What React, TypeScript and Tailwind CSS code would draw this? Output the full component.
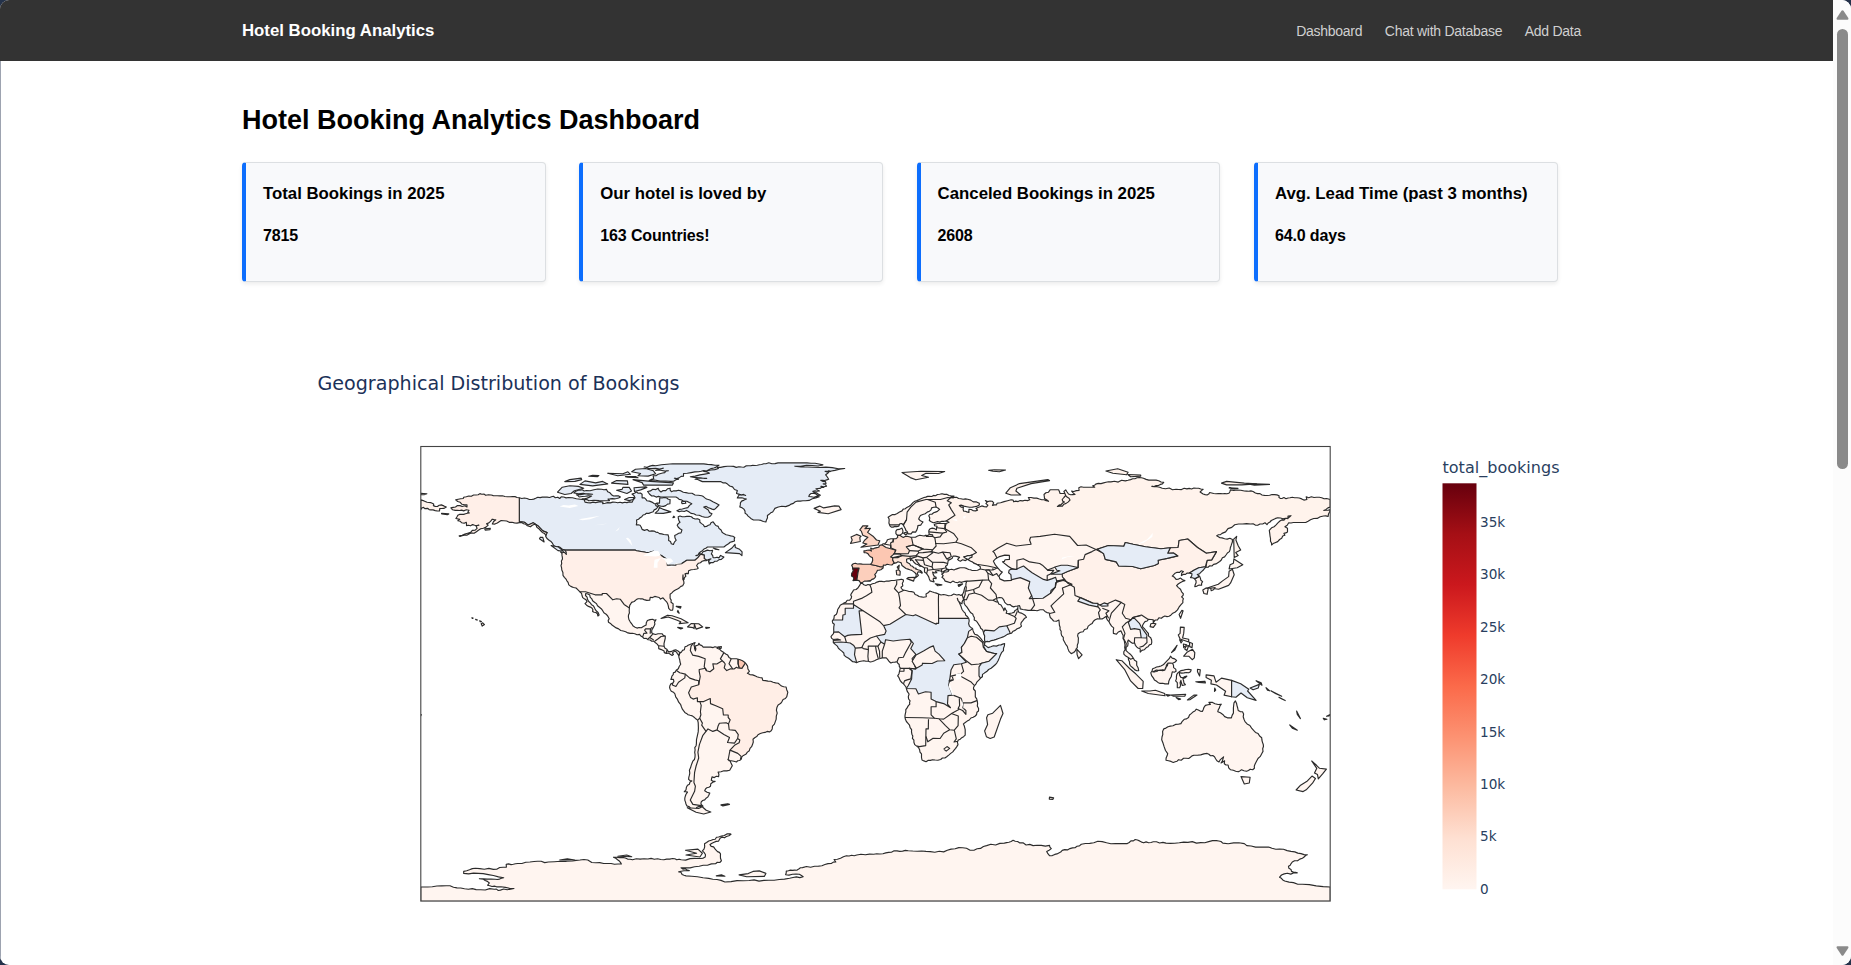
import React from "react";

const SCALE = 2.526;
const MAP_X = 420.8;
const MAP_Y = 446.5;
const MAP_W = 909.4;
const MAP_H = 454.6;

const NONE = "#e5ecf6";
const BASE = "#fff5f0";
const LINE = "#2b2b2b";

type Point = [number, number];

// Adds small alternating bends to the long segments of a coast line.
function weather(points: Point[]): Point[] {
  const out: Point[] = [];
  points.forEach((a, i) => {
    const b = points[(i + 1) % points.length];
    out.push(a);
    const dx = b[0] - a[0];
    const dy = b[1] - a[1];
    const len = Math.hypot(dx, dy);
    if (len < 1.3 || len > 15 || dx === 0 || dy === 0) return;
    const n = Math.min(4, Math.max(2, Math.round(len / 0.9)));
    for (let k = 1; k < n; k++) {
      const t = k / n;
      const seed = Math.sin((a[0] + dx * t) * 12.9 + (a[1] + dy * t) * 78.2) * 43758.5;
      const off = (seed - Math.floor(seed) - 0.5) * 0.62;
      out.push([a[0] + dx * t - (dy / len) * off, a[1] + dy * t + (dx / len) * off]);
    }
  });
  return out;
}

function trace(points: string, closed = true, rough = false): string {
  let list = points
    .trim()
    .split(/\s+/)
    .map((pair) => pair.split(",").map(Number) as Point);
  if (rough) list = weather(list);
  const d = list
    .map(([lon, lat]) => `${(MAP_X + (lon + 180) * SCALE).toFixed(1)} ${(MAP_Y + (90 - lat) * SCALE).toFixed(1)}`)
    .join("L");
  return "M" + d + (closed ? "Z" : "");
}

type Shape = { fill: string; pts: string };

const NORTH_AMERICA = `-141,69.7 -143.6,70.15 -145.7,70.1 -149.7,70.5 -152.1,70.8 -154.3,70.7 -156.6,71.35 -158.1,70.8 -161,70.4 -163,69.9 -163.2,69.4 -166.2,68.9 -164.4,67.9 -163.7,67.1 -161.7,66.9 -161.7,66.1 -164.5,66.6 -168.1,65.7 -166.4,64.7 -163,64.5 -160.9,64.8 -161.4,64 -160.8,63.7 -163,63.1 -164.7,63.1 -165.7,62.1 -166.1,61.5 -164.6,61.2 -165.3,60.6 -163.8,59.8 -162,60 -161.9,58.7 -158.7,58.8 -157,58.9 -158.2,58.6 -157.7,57.6 -160.3,56 -164.8,54.6 -164.5,54.4 -161.8,54.9 -158.1,56.2 -156.3,57.4 -154.2,58.1 -153.3,58.9 -154,59.4 -151.7,61.2 -150.3,61 -151.7,59.3 -149.7,59.7 -148.2,60.7 -146,60.5 -143.9,60 -140,59.9 -137.8,58.6 -136.6,58.2 -135,59.2 -134.1,58.1 -131.9,56 -130.5,54.8 -130.5,54.3 -129.1,52.8 -127.9,51.7 -127.4,50.8 -125.6,50.4 -123,49 -122.4,47.3 -123.1,48.1 -124.7,48.3 -124.1,46.9 -123.9,45.5 -124.5,42.8 -124.2,41.1 -123.7,39 -122.5,37.5 -121.7,36.2 -120.6,34.6 -118.5,34 -117.1,32.5 -116.2,31 -115.9,30.2 -114.2,28.6 -115,27.8 -113.6,26.7 -112.2,26 -112,24.7 -110.7,24.3 -109.9,22.9 -109.4,23.3 -110.6,25 -111.3,26.3 -112.8,28 -114,29.5 -114.8,31 -114.7,31.8 -113.1,31.2 -112,28.9 -110.5,27.8 -109.3,26.4 -108,25 -106,22.9 -105.4,21.8 -105.7,20.4 -104.3,19.3 -101.7,17.8 -98,16.2 -95.3,15.9 -93.4,15.6 -91.6,14 -89.2,13.4 -87.8,13 -87.2,12.4 -85.8,11 -85.8,10 -84.8,9.6 -83.7,9 -83.6,8.4 -82,8.2 -80.5,7.3 -80,7.6 -80.4,8.3 -79.5,9 -78.4,8 -77.9,7.3 -77.4,8.4 -79.1,9.5 -80.8,8.9 -82.2,9 -83.7,10.9 -83.5,13 -83.2,15 -84.5,15.9 -86.1,15.9 -88,15.8 -88.6,16.3 -88,18.3 -87.6,19 -87.5,20.5 -86.9,21.4 -88.2,21.6 -90.3,21.1 -90.8,19.3 -91.9,18.7 -94.4,18.1 -95.9,18.9 -96.5,19.8 -97.6,21.5 -97.8,22.5 -97.5,25 -97.3,27.1 -96.6,28.3 -94.7,29.4 -93.2,29.7 -91.6,29.4 -89.4,29.1 -89.2,30.3 -86.4,30.4 -85.1,29.6 -84.1,30.1 -82.7,28.5 -82,26.9 -81.2,25.2 -80.3,25.2 -80.1,26.9 -81.3,29.9 -81.3,31.5 -79.2,33.2 -77.6,34.1 -76.3,34.9 -75.8,35.9 -76.3,37.5 -76.2,39.2 -75.8,37.3 -75.1,38.6 -75.4,39.6 -74.1,39.7 -74,40.8 -71.9,41.3 -70.7,41.5 -70.2,41.8 -70.8,42.9 -70.1,43.8 -67,44.8 -65.1,45.5 -66.1,44.7 -65.8,43.5 -63.6,44.6 -61,45.3 -60,46.2 -61.3,46.9 -62,45.9 -64.3,46 -65,47.5 -64.5,48.9 -67.5,48.6 -70.3,47 -71.1,46.8 -68.5,48.8 -66.5,50.2 -60,50.2 -58.2,51.5 -55.8,52.6 -55.7,54 -57.3,54.6 -60,55.5 -61.9,57.5 -64.3,60.2 -65.5,59 -66.2,58.8 -67.7,58.2 -69.5,60 -69.6,61 -72.2,61.6 -73.8,62.4 -77.4,62.5 -78.1,62.2 -77.4,60 -78.5,58.8 -76.6,57 -77,55.8 -79.5,54.8 -78.9,52.9 -80,51.2 -81.9,52.8 -82.1,55 -85.5,55.5 -88.5,56.6 -92.4,57.2 -93.2,58.8 -94.7,59 -94.6,60.9 -92,62.9 -90.7,63.6 -88,64.2 -86.9,65.2 -86,66.2 -87.3,67.2 -85.5,67.6 -85.4,69.7 -82.6,69.6 -81.3,69 -81.4,67.3 -83.9,66.3 -85.8,66.6 -88.5,68 -90.5,68.5 -91.5,69.7 -92.4,69.7 -92.4,71.1 -94.6,72 -96.4,71.2 -95.2,69.7 -96.4,67.9 -98.4,67.8 -102,67.7 -104,68 -108,67.4 -107.9,68 -109,68.2 -110.8,67.8 -115,68 -115.3,68.9 -121.5,69.8 -124.4,70.1 -125,69.4 -127.5,70.3 -129,69.8 -131,70 -134.5,69.5 -137,69 -139,69.6`;

const SOUTH_AMERICA = `-77.4,8.4 -76.8,8.6 -75.7,9.5 -75.4,10.7 -74.2,11.3 -72.2,12.1 -71.4,12.4 -71.9,11.4 -71.6,10 -71.3,9.1 -71.1,9.9 -71.4,11 -70.2,11.4 -69.9,12.1 -68.2,10.6 -66.2,10.6 -64.3,10.4 -61.9,10.7 -62.7,10.1 -61,9 -60,8.4 -58.5,7.4 -57.1,6 -55,6 -53.6,5.6 -51.8,4.6 -51.3,4 -50.5,1.9 -49.9,1 -50.7,0.2 -48.6,-0.4 -47.9,-0.7 -44.9,-1.6 -44.6,-2.6 -41.5,-2.9 -38.5,-3.7 -37.2,-4.8 -35.4,-5.2 -34.7,-7.3 -35.1,-9 -37,-11 -39,-13.2 -39.3,-17.9 -40.9,-21.8 -42,-23 -44.6,-23.3 -46.5,-24.1 -48.5,-25.9 -48.7,-28 -50.7,-31 -52.3,-32.3 -53.8,-34.3 -55,-34.9 -57.1,-34.4 -58.4,-33.9 -57.2,-35.3 -56.7,-36.4 -57.7,-38.2 -62.3,-38.9 -62.1,-40.7 -64.7,-40.8 -65,-42.1 -63.5,-42.6 -65.2,-43.5 -65.3,-44.5 -67.3,-45.6 -67.6,-46.3 -65.6,-47.2 -66,-48.1 -67.6,-49.9 -69,-50.7 -69.1,-51.6 -68.3,-52.4 -70.8,-52.9 -71,-53.8 -73,-53.5 -74.7,-52.3 -75.5,-50 -75,-47.7 -74.4,-46.8 -75.7,-46.6 -74.4,-44.1 -72.7,-42.4 -74,-41.8 -73.5,-39.3 -73.2,-37.1 -71.7,-33.9 -71.4,-30.1 -70.9,-27.6 -70.1,-21.4 -70.4,-18.3 -73.4,-16.4 -76,-14.6 -77.1,-12.2 -79.4,-7.9 -81.3,-6.1 -81.4,-4.7 -79.8,-3 -80,-2.2 -81,-2.2 -80.6,-0.9 -80,0.4 -78.9,1.4 -77.1,3.8 -77.5,5.6 -77.9,7.3`;

const OLD_WORLD = `180,69 178.6,69.4 175.7,69.9 173.6,69.8 170.5,70.1 170.8,69 169.6,68.8 167.8,69.6 164.1,69.7 160.9,69.4 159.7,69.9 159.8,70.5 157,71 153,70.8 150.4,71.6 149.5,72.2 146,72.4 140.5,72.8 139.9,71.5 137.5,71.3 133.9,71.4 132.3,71.8 131.3,70.8 129.7,71.2 128.5,72 129.7,73 127,73.5 123.3,73.2 119,73.1 113.5,73.5 109.4,74.2 112.8,75 114.1,75.8 111.1,76.7 108.2,76.7 106.1,77.4 104.4,77.7 101,76.9 98.9,76.4 93.2,76 90.3,75.6 87.2,75.1 86,74.5 86.8,73.9 82.3,73.9 80.5,73.7 80.6,72.6 78.5,72.2 77.6,72.4 79,71 76.4,71.2 75.3,72.8 74.6,72.2 75.3,70.6 73.9,69 74.8,68 72,66.3 74,66.4 76.2,68 77,68.8 75,71.4 73.1,71.4 72.8,72.2 72.5,72.9 69.2,72.9 68.5,71.9 66.7,71 66.9,69.4 68.5,68.3 64.9,69.2 60.5,69.8 61.1,68.9 57.3,68.6 54.7,68.1 54.5,68.8 53.7,68.9 48.1,67.5 47.9,66.9 46.3,66.7 46.8,67.7 46.3,68.3 43.5,68.6 44.2,68 43.7,67.4 44.5,66.8 44,66.1 42.1,66.5 39.8,65.5 40.4,64.8 39.6,64.5 37,65.1 37,63.9 36.2,64.1 34.9,64.4 34.8,65.9 33.2,66.6 33.9,66.8 38.4,66 40,66.3 41.1,66.8 41.1,67.5 36.5,69.1 33.8,69.3 32.1,69.9 30,69.9 31.1,70.4 28.2,71.1 24.5,71 21.4,70.3 19.2,69.8 16.4,68.6 14.8,67.8 12.4,65.9 10.5,64.5 8.6,63.5 5.9,62.6 5,62 5.3,59.7 5.7,58.6 7,58.1 8.4,58.3 10.4,59.5 11,58.9 11.8,57.4 12.6,56.3 12.9,55.4 14.1,55.4 14.7,56.2 15.9,56.1 16.4,57 16.8,58.7 17.9,58.9 18.8,60.1 17.8,60.6 17.1,61.3 17.8,62.7 21.4,64.4 22.2,65.7 23.9,66 25.4,65.1 24.5,64.3 21.5,63.2 21.1,62.6 21.5,61.7 21.3,60.7 22.9,59.8 26.3,60.4 28,60.5 29.1,60 28,59.5 24.6,59.5 23.3,59.2 23.4,58.6 24.4,58.4 24.1,57 22.5,57.7 21.6,57.4 21.1,56 21.3,55.2 19.9,54.9 18.6,54.7 17.6,54.9 14.8,54.1 12.5,54.5 11,54 10,54.6 9.9,55 10.9,56.5 10.5,57.7 9.4,57.2 8.5,57.1 8.1,56.5 8.1,55.5 8.8,54 8.1,53.5 6.1,53.5 4.7,53.1 3.8,51.6 2.5,51.1 1.6,50.9 1.3,50.1 -1,49.4 -1.9,49.8 -1.6,48.6 -3.3,48.9 -4.6,48.7 -4.5,48 -3,47.6 -1.2,46 -1.4,44 -1.9,43.4 -4.3,43.4 -8,43.8 -9.4,43 -9,41.5 -8.8,40.8 -9.5,38.7 -8.8,38.3 -8.9,36.9 -7.5,37.1 -6.5,36.9 -5.9,36 -5.4,36 -4.4,36.7 -2.1,36.7 -1.4,37.4 -0.7,37.6 0.1,38.7 -0.3,39.3 0.8,41 2.1,41.2 3,41.9 3.1,43.1 4.6,43.4 6.5,43.1 8.9,44.4 10.2,43.9 10.5,42.9 12.1,41.7 13.6,41.2 15.7,40 16.1,38.7 15.7,37.9 16.6,38.6 17,39 16.5,39.7 16.9,40.4 18.4,39.8 18.5,40.2 15.9,41.5 16.1,41.8 15.1,42 14,42.8 13.5,43.6 12.4,44.2 12.3,45.4 13.7,45.6 13.9,44.8 14.3,45.2 15.2,44.2 16,43.5 18.5,42.5 19.4,41.9 19.4,40.3 20.7,39 21.1,38.3 21.3,37.6 21.7,36.8 23.2,36.4 22.8,37.5 23.1,37.9 24,37.7 24,38.2 22.9,39.3 22.6,40.3 24.3,40 23.7,40.7 24.9,40.9 26.1,40.6 26.3,40.2 27.2,40.7 28.8,41.1 29,41.3 28.1,41.6 27.7,42.6 28.6,43.7 28.8,44.9 29.6,45.3 30.7,46.6 33.3,46.1 32.5,45.3 33.6,44.6 36.5,45.4 34.9,46.3 38.2,47.1 38.2,46.2 36.7,45.2 37.5,44.7 40,43.4 41.5,42.4 41.5,41.5 40.4,41 38.3,40.9 36.9,41.3 35.2,42 33.5,42 31.1,41.1 29.2,41.2 28.8,40.5 27.3,40.4 26.2,39.5 26.8,38.9 26.3,38.2 27,37.7 27.6,36.7 29.7,36.1 30.6,36.7 32.5,36.1 34,36.2 36.2,36.7 35.8,35 35.1,33.1 34.5,31.5 33.8,31 32.2,31.2 31,31.6 28.9,30.9 25,31.6 23.2,32.2 21.5,32.8 20,31.6 20.1,30.5 19,30.3 15.7,31.4 15.2,32.3 11.5,33.1 10.3,33.8 10.1,34.3 10.8,34.8 10.6,35.9 11.1,37.1 9.5,37.3 5.3,36.7 1.5,36.6 -1.2,35.7 -2.2,35.2 -4.6,35.3 -5.2,35.8 -5.9,35.8 -6.9,34.1 -8.7,33.2 -9.8,31.2 -9.6,29.9 -12.6,28 -13.1,27.6 -14.4,26.3 -15.1,24.5 -16.3,23 -17.1,20.9 -16.3,19.6 -16.5,16.7 -17.6,14.7 -16.7,13.6 -16.7,12.4 -15.1,11 -13.2,8.9 -12.4,7.3 -9,4.8 -7.5,4.4 -5.8,5 -4.6,5.2 -2,4.7 1.1,5.9 2.7,6.3 4.3,6.3 5.4,4.9 6.1,4.3 8.5,4.8 9.4,3.7 9.8,2.3 9.5,1 8.8,-0.8 9.5,-2 11.1,-4 12.3,-6 13.3,-8 13,-9 13.7,-10.7 13.6,-12 12.5,-13.5 11.8,-15.8 11.7,-17.3 12.8,-19.5 14.3,-22.1 14.4,-23.9 15.2,-27.1 16.3,-28.6 18.2,-31.7 18.2,-33.1 18.4,-34.1 20,-34.8 22.6,-34 24.7,-34.2 25.8,-33.9 28.2,-32.8 30.6,-30.9 32.2,-28.8 32.8,-26.2 35.5,-24.3 35.5,-22.1 34.8,-19.8 36.3,-18.7 39.5,-16.7 40.8,-14.7 40.3,-10.8 39.5,-9.1 39.5,-6.8 38.8,-6 39.2,-4.7 40.1,-3.3 41.6,-1.7 43.1,0.3 46.6,2.9 48.6,5.3 50.7,9.2 51.1,12 48.9,11.4 44.6,10.4 43.1,11.5 43.3,12.4 41.2,14.5 39.3,15.7 38.4,18 37.2,18.9 37.1,21 35.5,24 33.9,26.6 32.4,29.9 33.4,28.3 34.2,27.7 34.9,29.5 35.1,28.1 37.2,24.9 38.5,23.7 39.1,21.3 40.9,19.5 42.7,16.7 43.2,13.2 43.5,12.6 45,12.7 48.7,14 52.2,15.6 55.3,17.2 57.8,18.9 57.7,20.3 59.8,22.4 58.6,23.6 56.8,24.3 56.4,26.3 56,25.5 54,24.1 51.8,24 51.6,25.4 51.2,26.1 50.8,25 50.2,26.4 48.8,27.7 48,29.9 50.1,30.1 50.9,29 51.6,27.9 54.7,26.5 57,27 57.3,25.7 61.5,25.1 66.4,25.4 67.1,24.7 68.8,24.1 69.2,22.3 70.5,20.9 72.6,21.3 72.8,19.2 73.5,16 74.8,12.7 76.6,8.9 77.5,8 79.2,9.2 79.9,10.4 80.3,13.3 80.2,15.9 82.2,16.7 85,19.5 87,21.4 88.9,21.7 90.5,22.2 91.4,22.8 92.4,20.7 94.3,18.2 94.2,16 95.4,15.7 97.2,17 97.6,16.1 98.5,13.1 98.8,11.4 98.3,7.8 100.1,6.5 100.6,3.9 101.4,2.8 103.5,1.2 104.2,1.3 103.4,3.4 103.4,4.9 102.1,6.2 100.1,8.4 99.2,9.2 99.2,10.5 100,12 100.1,13.4 101,12.6 102.6,12.2 103.5,10.6 104.8,9.9 104.8,8.6 106.4,9.5 107.2,10.4 109.2,11.7 109.3,13.4 107.4,16.7 106.4,18 105.7,19.1 106.7,20.7 108.1,21.6 109.9,21.4 110,20.3 110.8,21.3 113.8,22.5 116.9,23.2 118.7,24.5 121.7,28.2 121.9,29.8 121.2,30.5 121.9,31.7 119.2,34.9 120.6,36.1 122.5,36.9 120.8,37.9 119,37.4 117.5,38.7 118,39.2 121,40.8 121.9,40.5 121.1,38.9 124.3,39.9 125.3,39.6 124.7,38.1 126.2,37.7 126.9,36.9 126.4,34.5 129.1,35.1 129.5,36.5 128.3,38.6 127.4,39.3 129.7,41 130.8,42.2 133.2,42.7 135.5,44 138.2,46.3 140.1,48.4 140.5,50 141.3,52.2 141.3,53.2 137.2,53.8 135.1,54.7 137.2,55.6 142.2,59 148.5,59.3 151.3,58.8 154.2,59.8 155,59.1 156.7,60.7 159.3,61.8 163.3,61.4 163.3,62.5 164.5,62.6 163.2,61.6 160.1,60.5 156.8,57.8 155.9,56.8 156.4,52.5 156.8,51 158.2,51.9 160,53.2 162.1,54.9 161.7,55.6 163.1,56.2 163.1,57.6 162.1,58.2 163.6,59.8 166.3,59.9 170.3,59.9 172.2,61 177.4,62.5 179.2,62.3 180,65 177.5,64.7 180,66`;

const ANTARCTICA = `-180,-84.4 -177.3,-84.4 -169.9,-83.9 -164.2,-84.8 -158.1,-85.4 -150.9,-85.3 -148.5,-85.6 -143.1,-85 -150,-84.3 -153.6,-83.7 -152.9,-82.8 -154.5,-81.8 -156.8,-81.1 -150.6,-81.3 -147.2,-80.7 -155.3,-79.1 -163,-79 -163,-78.2 -158.4,-77 -151.3,-77.4 -146.1,-76.5 -146.2,-75.4 -144.3,-75.5 -141.6,-75.1 -135.2,-74.3 -129.5,-74.5 -120,-74.1 -113.9,-73.7 -112.3,-74.7 -106,-75.1 -100.6,-75.3 -101.3,-74.2 -103.7,-72.6 -99,-72.9 -96.2,-73.6 -90.1,-73.3 -85,-73.5 -80.3,-73.1 -76.9,-73.6 -69.9,-73.1 -67.4,-72.5 -67.3,-71.6 -68.5,-70.1 -67.6,-68.5 -67.7,-67.3 -65,-65.9 -62.1,-64.6 -57.6,-63.3 -57.2,-63.5 -59,-64.4 -61.5,-65.1 -62.1,-66.2 -65.5,-67.6 -63.6,-69.2 -61.8,-70.7 -61.4,-72 -61,-74 -63.3,-75.2 -69.8,-76.2 -77,-76.8 -73.7,-77.9 -77.9,-78.4 -75,-80 -66,-81 -59.6,-82.4 -50,-81.8 -42.2,-81.7 -34,-80.9 -28.6,-80.3 -30.1,-79.3 -35.6,-79.5 -35.3,-78.1 -32,-77.7 -28.9,-76.7 -22.5,-76.1 -17.5,-75.1 -15.7,-74.5 -16.4,-73.5 -11.5,-72 -7.4,-71.7 -0.7,-71.4 4.1,-70.9 8.5,-70.1 13,-70 20,-70.3 27,-70.5 33,-68.8 39,-69.8 44,-68 51,-67 54.5,-65.9 57,-66.9 62.4,-68 68.9,-67.9 69.6,-69.2 67.8,-70.3 68.9,-72 71,-71.5 73.9,-69.9 78,-68.9 81.5,-67.5 88,-66.3 95,-67.2 99.7,-67.2 102.8,-65.6 106.2,-66.9 110,-66.5 115,-67 122,-66.6 128.8,-66.8 135,-66 137.5,-67 146,-67.2 147,-68 154,-68.6 160,-69.4 166,-70.5 171,-71.6 169,-73 165,-74.5 163.5,-76.2 164.7,-78.2 167,-78.8 161.8,-79.2 160,-80.5 162,-82 169,-83.3 180,-84.4 180,-90 -180,-90`;

const LANDMASSES: string[] = [NORTH_AMERICA, SOUTH_AMERICA, OLD_WORLD, ANTARCTICA].map((pts) => trace(pts, true, true));

const REGIONS: Shape[] = [
  // North and South America
  { fill: NONE, pts: "-141,72 -141,60.3 -139,60 -137.5,58.9 -135.5,59.8 -133.4,58.4 -131.7,56.6 -130,55.9 -131,54.5 -130,48 -122.8,49 -95.2,49 -94.6,48.7 -91,48.1 -89.6,48 -88,48.5 -84.8,46.8 -82.5,45.3 -82.4,43 -79,43 -79,43.4 -76.8,43.6 -74.7,45 -71.5,45 -70.3,46 -69.2,47.4 -67.8,47 -67.8,45.7 -66.5,44 -55,42 -50,60 -70,70 -90,74" },
  { fill: "#ffefe8", pts: "-141,72 -141,60.3 -139,60 -137.5,58.9 -135.5,59.8 -133.4,58.4 -131.7,56.6 -130,55.9 -131,53.5 -150,50 -175,50 -175,73" },
  { fill: "#ffefe8", pts: "-122.8,49 -95.2,49 -94.6,48.7 -91,48.1 -89.6,48 -88,48.5 -84.8,46.8 -82.5,45.3 -82.4,43 -79,43 -79,43.4 -76.8,43.6 -74.7,45 -71.5,45 -70.3,46 -69.2,47.4 -67.8,47 -67.8,45.7 -66,44.5 -66,30 -80,22 -97.1,25.9 -99.5,27.5 -101,29.5 -102.5,29.7 -104,29.3 -106.5,31.8 -108.2,31.8 -108.2,31.3 -111,31.3 -114.8,32.5 -117.3,32.5 -128,33 -128,49" },
  { fill: "#ffeee6", pts: "-60.7,5.2 -59.9,4.5 -59.5,3.9 -59.9,2.4 -58.9,1.3 -57.3,2 -56,1.9 -55,2.6 -54.5,2.3 -52.9,2.2 -51.6,4.2 -49,5 -30,-2 -30,-20 -45,-30 -53.4,-33.8 -53.2,-32.7 -54.5,-31.5 -57.6,-30.2 -55.8,-28.3 -54,-27.3 -53.7,-26.2 -54.6,-25.6 -54.3,-24.1 -55.5,-22.4 -57.9,-22.1 -58.2,-19.8 -57.5,-18.2 -58.3,-17.3 -58.3,-16.3 -60.2,-16.3 -60.5,-13.8 -63.2,-12.6 -65.3,-11.8 -65.4,-9.8 -68,-11 -70.5,-11 -70.5,-9.5 -72.2,-10 -73.2,-9.4 -74,-7.5 -72.9,-5.2 -70,-4.3 -69.4,-1.1 -69.8,1 -69.8,1.7 -67.3,2.2 -66.9,1.2 -65.5,0.8 -64,2 -64.4,4 -62.8,3.9" },
  { fill: "#fcc7b2", pts: "-54.4,5.9 -54.4,4 -54,2.4 -52.9,2.2 -51.6,4.2 -52,6" },
  // Africa
  { fill: NONE, pts: "-17.3,21.3 -13,21.3 -12.9,23.3 -12,23.5 -12,26 -8.7,26 -8.7,27.4 -4.9,25 -6.5,24.9 -5.4,15.6 -9.6,15.4 -11,15.2 -12.2,14.7 -14.6,16.6 -18,16.5 -20,20" },
  { fill: NONE, pts: "-17.5,12.4 -13.7,12.6 -11.5,12.4 -10,12.2 -8.6,11.2 -8,10.2 -8.3,7.6 -7.6,5 -7.4,3 -18,6" },
  { fill: NONE, pts: "3.2,19.1 5.7,19.6 12,23.5 14.9,23 15.9,23.4 24,19.6 24,20 25,20 25,22 38,22 38.6,18 36.9,16.8 36.4,14.3 35.2,12 34,10.5 34.2,8.4 33,7.8 36,4.6 34,4 31,3.6 29.9,1.5 29.5,-1.5 29,-4.5 30.5,-8.4 28.7,-8.6 28.5,-12 29.7,-13.4 27,-11.8 24,-11 22,-10 22,-7.3 19.8,-7.1 17,-8 16,-5.9 12.2,-5.8 13,-4.6 14.3,-2 14.5,1.2 13.3,2.2 16,2 14.5,6 16,7.7 14,10 15,12 13.6,13.7 10,13.4 7,13 4,13.5 3.6,11.7 2.2,12.6 0.4,15 3.6,15.6 4.2,17" },
  { fill: BASE, pts: "14.5,5 16.1,7.5 19,9 21.7,10.6 22.9,11.1 23.6,9 25.1,7.8 27.4,5.2 24.5,5.1 22.4,4.1 18.6,4.2 18.5,3.5 16.2,2.2" },
  { fill: BASE, pts: "36.4,14.3 35.2,12 34,10.5 34.2,8.4 33,7.8 35.8,5.3 38,3.6 41,3.9 42,4.2 45,5 48,8 44,8.9 42.7,10.6 42.4,12.4 40,14.5 37.9,14.9" },
  { fill: NONE, pts: "41.6,-1.8 41,-0.8 41,2.8 42,4.2 45,5 48,8 47,8.1 44,8.9 42.8,10.8 44,13.2 53,13.2 52,7" },
  // Asia
  { fill: "#fff3ec", pts: "30,70 28.4,68.5 30,67.7 29,66.9 30,65 31.5,62.8 28,60.5 27.5,59 27.7,57.3 30.9,55.6 32.6,53.4 31.8,52.1 34,51.5 38,49.9 40,48 38.2,47 36,45.3 40,43.4 44.5,42.7 48.5,41.8 48,46 47,48 46.5,48.4 48.6,49.8 52,51.7 55.7,50.6 59,51 61.6,51.3 61,53 61.4,54.1 65.2,54.4 70.9,55.3 76.9,54.4 80,50.8 83.4,51 87.3,49.2 92.2,50.8 98.3,50.5 98.9,52 102,51.3 106.9,50.3 113,49.5 116.7,49.9 119.8,50 120.2,52.8 123.6,53.4 127.5,50 131,47.7 135,48.4 133.1,45.1 131.3,44.9 130.8,42.2 141,42 160,48 182,60 182,80 30,80" },
  { fill: "#fff1ea", pts: "87.3,49.2 90.3,47.6 91,45.3 95.3,44.3 96.3,42.7 101.8,42.5 105,41.6 110.4,42.9 112,43.7 111.9,45 115.5,45.7 119.7,46.7 118,47.8 115.7,47.7 116.7,49.9 119.8,50 120.2,52.8 123.6,53.4 127.5,50 131,47.7 135,48.4 133.1,45.1 131.3,44.9 130.6,42.4 128,42 126.2,41.1 124.3,39.9 126,33 118,20 108,21.5 105.3,23.3 101.8,22.3 101.2,21.4 99,22 97.7,24 98.7,27.5 97.3,28.3 95,29.2 92,27.8 88.8,27.3 86,28 81.1,30.2 79,31 78.7,34.3 76,36 74,38.4 73.9,39.6 76,40.5 80.2,42 80.3,45 82.4,45.4 83,47.2 85.7,48.4" },
  { fill: NONE, pts: "87.8,49.3 92.2,50.8 98.3,50.5 98.9,52 102,51.3 106.9,50.3 113,49.5 116.7,49.9 115.7,47.7 118,47.8 119.7,46.7 115.5,45.7 111.9,45 112,43.7 110.4,42.9 105,41.6 101.8,42.5 96.3,42.7 95.3,44.3 91,45.3 90.3,47.6" },
  { fill: NONE, pts: "124.3,39.9 126.2,41.1 128,42 130.6,42.4 132,41 128.3,38.6 126.7,37.8 124,37.5" },
  { fill: NONE, pts: "52.4,41.5 55.5,41.3 57,42 58.6,42.7 60.4,41.2 62,40 66.5,37.4 68,37 70,37.7 71.3,38.2 71.8,36.7 74.9,37.4 71.3,36.1 71.2,34.3 69.5,33 69.3,31.9 66.3,29.9 60.9,29.8 61.8,31 60.5,34 61.1,36.5 57.3,38.1 54,37.3 52.5,37.4" },
  { fill: NONE, pts: "80.2,42.1 76,43 73.5,43 71,42.3 71.8,41 73,40.8 69.5,39.5 73.7,39.4 76,40.5" },
  { fill: NONE, pts: "80.1,28.8 81.1,30.2 86,28 88.1,27.9 88,26.5 84.6,27.2" },
  { fill: NONE, pts: "88.9,27.2 90.5,28.1 92,27.6 92,26.9 89.5,26.8" },
  { fill: NONE, pts: "100.1,20.4 102.2,22.4 104.5,20 105.3,18.4 107.5,15.3 107.3,14.2 105.2,14.3 104.7,17.5 102.5,17.9 101,17.6" },
  { fill: NONE, pts: "42.8,16.4 43.3,17.3 47,17 49,18.6 52,19 53.2,16.5 53,14.5 43,11.8" },
  // Europe
  { fill: "#67000d", pts: "-9,42 -6.5,41.9 -6.9,40.3 -7.1,38.8 -7.4,37 -9.6,36 -10.5,40" },
  { fill: "#fccfbc", pts: "-9,41.9 -6.5,41.9 -6.9,40.3 -7.1,38.8 -7.4,37 -6,35.9 2,38 4,42.4 1.8,42.4 0.5,42.8 -1.8,43.3 -3,45 -11,44" },
  { fill: "#fcc7b2", pts: "-1.8,43.3 0.5,42.8 1.8,42.4 4,42.4 7.5,43.1 7.5,43.8 6.8,45.1 6.8,46 6,46.3 7.5,47.6 8.1,49 6,49.5 4.2,50 2.5,51.1 0,51 -6,49 -3,45" },
  { fill: "#fde0d3", pts: "7,53.8 6.9,52.4 6,51.8 6.2,49.8 8.1,49 7.5,47.6 10,47.5 13,47.6 13.5,48.8 12.2,50.3 14.9,51 14.3,53.8 13,55 9.9,54.8 8.5,54.9" },
  { fill: "#fee6db", pts: "7.5,43.8 6.8,45.1 6.8,46 9,46 10.5,46.8 13.7,46.5 13.7,45.6 13,45 19,41 19,39.5 15.5,37.5 10,42" },
];

const BORDERS: string[] = [
  // Central America
  "-92.2,14.5 -91.7,16 -90.5,16.1 -91.4,17.3 -91,17.8 -89.1,17.8 -88.3,18.5",
  "-89.1,17.8 -89.2,15.9", "-88.2,15.7 -89.4,14.4 -90.1,13.8", "-89.4,14.4 -87.8,13.4", "-87.3,13 -86,13.9 -84.9,14.8 -83.1,15", "-85.7,11.1 -83.7,10.9", "-82.5,9.6 -82.9,8.1", "-77.4,8.4 -77.9,7.2",
  // South America
  "-72.2,12.1 -73,11 -73.3,9.2 -72.4,7.4 -70,6.9 -67.4,6 -67.8,2.8 -66.9,1.2",
  "-60,8.4 -61.4,5.9 -60.7,5.2", "-57.1,6 -58,4 -56.5,1.9", "-54.4,5.9 -54.4,4 -54,2.4",
  "-78.9,1.4 -77.5,0.4 -75.3,-0.1 -75.5,-1.6 -78,-3.3 -79,-5 -80.4,-4.4 -80.3,-3.4",
  "-75.3,-0.1 -73.5,-1.7 -71.5,-2.4 -70,-2.7 -70,-4.3",
  "-69.5,-11 -69,-12.5 -69.3,-15 -69.1,-16.2 -69.6,-17.6 -70.4,-18.3",
  "-69.6,-17.6 -68.5,-19.5 -68.8,-20.3 -67.1,-22.8 -68.4,-24.5 -69.7,-28 -70.3,-31 -70,-33.3 -71,-36.5 -71.6,-39 -71.9,-43 -71.3,-44.5 -71.6,-46.5 -73.3,-50 -72.3,-51.7 -68.4,-52.3",
  "-67.1,-22.8 -66.3,-21.8 -64.4,-22.8 -62.7,-22.2 -62.3,-20.6 -61.8,-19.6 -59.1,-19.4 -58.2,-19.8",
  "-62.7,-22.2 -60,-24 -57.8,-25.2 -58.6,-27.2 -55.8,-27.4 -54.6,-25.6", "-57.6,-30.2 -58.3,-33.9",
  // Africa
  "-2.2,35.2 -1.7,33.9 -1.4,32.3 -3.6,30.9 -5.2,30 -8.7,28.7 -8.7,27.4", "-8.7,27.7 -13.1,27.7",
  "8.4,37 8.4,35.5 7.5,33.8 9.1,32.1 9.5,30.2 9.9,27 9.3,26.1 12,23.5", "9.1,32.1 11.5,33.2",
  "-4.9,25 1.8,20.6 3.2,19.1", "25,31.6 24.9,29.5 25,22", "-16.8,13.6 -15,13.8 -13.8,13.4 -16.8,13.2", "-11.5,12.4 -12.2,14.7",
  "-8,10.2 -5.4,10.4 -4.8,10 -2.8,9.6 -3,7 -2.8,5", "-2.8,9.6 -2.9,11 0,11 1,11 2.2,12.6", "-5.4,10.4 -4.4,12.5 -2,14.2 0.4,15", "0,11 0.4,8.5 1.1,6", "0.9,11 1.6,9 1.7,6.2", "3.6,11.7 2.7,9 2.7,6.3",
  "13.6,13.7 14.2,12.5 12,8.6 11,6.6 9.2,6.4 8.5,4.8", "9.7,2.2 13.3,2.2 16,1.8", "9.7,1 11.3,1.1 11.3,2.2", "13.3,2.2 14.5,1.3 14,-2 12.5,-2.4 11.5,-2.8 11.1,-4",
  "34,4 34.9,1 33.9,0.1 29.6,-1", "33.9,-1 37.7,-3.1 39.2,-4.7", "30.4,-1.1 30.8,-2.4 29.3,-3", "30.4,-2.4 29,-2.8",
  "40.4,-10.5 37.8,-11.5 34.6,-11.5 33.9,-9.7 30.7,-8.4", "33.2,-9.7 33.3,-12.5 32.7,-13.7 34.5,-14.5 35.8,-16 35.8,-14.5 34.6,-13.5 34.6,-11.5",
  "24,-11 24,-13 22,-13 22,-16.2 23.4,-17.6 18.5,-17.4 11.7,-17.3", "23.4,-17.6 25.2,-17.8 27,-17.9 30.3,-15.6 33.2,-14", "25.2,-17.8 27.7,-20.5 29.4,-22.1 31.2,-22.3 32.7,-20.5 32.8,-16.7 30.3,-15.8", "21,-18 20.9,-21.8 20,-21.8 19.9,-28.4 17.4,-28.8 16.4,-28.6", "20,-24.8 20.7,-26.9 22.8,-25.5 25.6,-25.6 27,-23.5 29.4,-22.1", "31.2,-22.3 32,-25.7 31.1,-27 32.1,-26.8 32.8,-26.8", "27,-29.8 28.3,-28.8 29.4,-29.5 28,-30.6 27,-29.8",
  // Middle East
  "36.2,36.7 37.1,36.7 42.4,37.1 44.8,37.2 44.5,39.8 43.6,41.1 41.5,41.5", "42.4,37.1 41,34.4 38.8,33.4 35.8,32.7 36,34.6", "38.8,33.4 39.2,32 37,31.5 36,29.3 35,29.4", "39.2,32 42,31.1 44.7,29.2 46.5,29.1 48,29.9", "46.5,29.1 47.7,28.5 48.5,28.5", "44.8,37.2 46,35.7 45.5,34 47.7,31.5 48,30", "35.5,33 35.5,31.5 34.9,29.5 34.3,31.2", "52,19 55,20 55.7,22 55,22.7 51.6,24.2", "55.3,22.8 56.2,24.8", "43.6,41.1 46.5,41.1 48,41.8", "44.5,39.8 46.5,38.9 48,39.7 48.8,38.4", "43.6,41.1 45,41.2 46.5,39", "46.5,41.8 46.5,41.1",
  "52.5,42 56,41.3 56,45 58.5,45.6 61,44.3 65,43.7 66.1,43 68.1,41.1 71,42.2", "80.2,42.2 80.3,45", "68,41 70.6,41 69.3,39.5 68,38.9 68,37.1", "61.8,31 63,27.2 61.5,25.1", "69.3,31.9 71.2,34.3 71.8,36.7 74.9,37", "74.5,37 77.8,35.5 74,34 74.5,31.7 70.6,28 69.5,26.9 71,24.4 68.2,23.7",
  "88.1,26.6 89,25.3 88.3,24.3 88.9,21.7", "89.8,26 92.4,25 91.2,24 92.3,22", "97.3,28.3 95.2,26 93.4,24 92.4,20.7", "101.2,21.4 99,20 97.7,18.6 98.8,16 98.2,14 99.3,12 99,10", "100.1,6.5 101,5.8 102,6.2", "102.5,12.2 102.6,14.3 105.2,14.3", "107.4,14.4 107.5,12.4 106,11 104.5,10.5", "105,23 102.2,22.4", "126.7,37.8 128.3,38.6",
  // Europe
  "5.2,59 11,59 12.3,61 12.5,64 14,66 16.1,68 20,69 25.7,69 28.6,69.8 31,69.6", "20.6,69 23.7,67.9 24,65.9", "11,58.9 12.3,61", "28,59.5 27.3,57.5", "24.3,57.8 27.3,57.5 28.2,56.2 26.6,55.7 21.1,56.2", "26.6,55.7 25.6,54.2 23.5,53.9 22.7,54.4 19.9,54.4", "22.7,54.4 22.6,55 21.2,55.3", "23.5,53.9 23.8,52 24,50.6 22.6,49.1 18.9,49.4 15,51", "23.6,51.6 27,51.5 31.8,52.1", "12.2,50.3 15,51 18.9,49.5 16.9,48.6 13.5,48.8", "16.9,48.6 17.1,47.9 16,46.8 13.7,46.5", "17.1,47.9 18.8,48 22.1,48.4 22.7,47.9 20.2,46.1 18.8,45.9 16,46.8", "22.6,49.1 22.1,48.4 24.9,47.7 26.6,48.2 28.2,45.5 29.7,45.3", "26.6,48.2 29.5,47.9 30,46.4 28.2,45.5", "20.2,46.1 22.5,44.2 27,44.1 28.6,43.7", "13.7,45.5 16.5,46.5", "18.8,45.9 19,44.9 15.8,45.2 17.6,43 18.5,42.5", "19,44.9 19.4,43.2 22.4,42.3 22.7,44.2", "19.4,42 20.6,41.9 20.6,41 20.2,39.6", "20.6,41 22.9,41.3 26.3,41.6 26.1,40.7", "26.3,41.6 28,42", "22.4,42.3 22.9,41.3", "7,47.5 9.6,47.5 10.4,46.8 7,46", "3.3,51.4 6,50.9 6,49.6", "8.6,54.9 9.9,54.9", "7.2,53.4 6.9,52",
];

const ISLANDS: Shape[] = [
  { fill: NONE, pts: "-46.8,82.6 -43.4,83.2 -38.6,83.5 -27.1,83.5 -20.8,82.7 -22.7,82.3 -31.9,82.2 -22.1,81.7 -12.2,81.3 -20,80.2 -17.7,80.1 -18.9,79.4 -19.7,78.8 -18.5,77 -21.7,76.6 -19.8,76.1 -19.6,75.3 -20.7,75.2 -19.4,74.3 -21.6,74.2 -20.4,73.8 -23.6,73.3 -22.2,72.4 -24.8,72.3 -21.8,70.7 -25.5,71.4 -26.4,70.2 -22.3,70.1 -27.7,68.5 -31.8,68.1 -34.2,66.7 -39.8,65.5 -40.7,64.1 -42.8,62.7 -43.4,60.1 -46.3,60.9 -48.3,60.9 -49.2,61.4 -51.6,63.6 -52.1,65.2 -53.7,66.1 -53,68.4 -51.1,69.2 -54.7,69.6 -54,70.8 -51.4,70.6 -55,71.4 -54.7,72.6 -58.6,75.1 -61.3,76.1 -68.5,76.1 -71.4,77 -66.8,77.4 -73.3,78 -65.7,79.4 -68,80.1 -62.2,81.3 -62.7,81.8 -57.2,82.2 -53,81.9 -50.4,82.4" },
  { fill: NONE, pts: "-61.9,66.9 -63.9,65 -67,66.3 -68,66 -64.7,63.4 -66.3,62 -71,62.9 -74.8,64.7 -77.7,64.2 -78.6,64.6 -74.3,65.8 -72.7,67.3 -76.9,68.9 -79,70 -85,70 -88.6,70.4 -89.5,71.2 -90.2,72.2 -86,73.5 -84.9,72 -81.3,73.5 -80.8,72.1 -78,72.7 -74,71.5 -68.8,70.5 -66.9,69.2" },
  { fill: NONE, pts: "-119.4,71.6 -117.7,72.7 -114.5,72.6 -108.4,73.1 -106.5,73 -104.5,70.9 -101,70 -102.5,69.4 -105.9,69.2 -105.3,68.6 -113.5,68.5 -116.1,69.3 -112.4,70.4 -117.3,70 -118.4,70.9 -112,71.1" },
  { fill: NONE, pts: "-123,71 -125.9,71.9 -124,73.9 -121,74.5 -117.6,74.2 -115.5,73.5 -119.2,72.5 -120.5,71.4" },
  { fill: NONE, pts: "-62,82.6 -68,83.1 -78,83.1 -87,82.4 -91.6,81.9 -90,81.3 -84,81.4 -87,80.5 -82,80.4 -85,79.3 -88,78.4 -87.8,77.2 -89.6,76.5 -81,76.2 -78,77 -79.6,77.4 -76,78.2 -76,79.3 -70,80 -66,80.8 -64,81.5" },
  { fill: NONE, pts: "-88,80.4 -91,81.3 -95,81 -96.5,80 -93,79.3 -94,78.4 -90,78.3 -87,79.2" },
  { fill: NONE, pts: "-80,75.6 -80.4,74.7 -91.8,74.7 -92.4,75.7 -96,76.9 -89,76.2" },
  { fill: NONE, pts: "-100,73.8 -97.5,73.8 -96.6,72.4 -98.4,71.4 -102.5,72.7 -100.3,73" },
  { fill: NONE, pts: "-95.6,73.7 -91,74 -90.5,73.8 -93,72.8 -95.4,72.2" },
  { fill: NONE, pts: "-98.2,76.4 -102.5,76.5 -104.5,75.5 -98,75" },
  { fill: NONE, pts: "-108,76.2 -106,75.2 -112,74.4 -117,75 -115,76.4 -110.8,75.6" },
  { fill: NONE, pts: "-116.5,77.5 -121,76.9 -123,76.1 -119,76.2 -116.3,76.9" },
  { fill: NONE, pts: "-98,80 -100,79.2 -106,79.4 -102,78.4 -97,79" },
  { fill: NONE, pts: "-109.5,78.5 -112,78.6 -113.5,78.2 -110,78.1" },
  { fill: NONE, pts: "-94,77.6 -98,77.8 -99,78.1 -95,78.1" },
  { fill: NONE, pts: "-95.5,69.8 -97.5,69.8 -99.3,69 -97.5,68.6 -96,69" },
  { fill: NONE, pts: "-85.5,65.9 -83.9,65.1 -81,64.1 -84,63.5 -87.2,63.6 -86,64.7" },
  { fill: NONE, pts: "-75.3,68.3 -76.8,68.1 -76.6,67.4 -75.1,67.5" },
  { fill: NONE, pts: "-79.9,62.4 -79.5,62 -80.2,61.8" },
  { fill: NONE, pts: "-55.6,51.3 -56.8,49.8 -59.4,48 -53.8,47.6 -52.9,46.8 -52.8,48.3 -53.8,49.3 -55.5,50" },
  { fill: NONE, pts: "-64.2,49.8 -62,49.1 -63.5,49.4" },
  { fill: NONE, pts: "-123.5,48.5 -125.7,48.8 -128.4,50.8 -125.5,50.2" },
  { fill: NONE, pts: "-131.2,52.2 -133,53.5 -132.7,54.1 -131.7,54" },
  { fill: "#ffefe8", pts: "-152.5,57.6 -154.7,57.4 -154.5,56.9 -152.6,57.1" },
  { fill: "#ffefe8", pts: "-155.5,20.2 -154.8,19.5 -155.7,18.9 -156.1,19.8" },
  { fill: "#ffefe8", pts: "-156.7,21 -156,20.7 -156.5,20.6" },
  { fill: "#ffefe8", pts: "-158.3,21.6 -157.6,21.3 -158,21.3" },
  { fill: "#ffefe8", pts: "-159.8,22.2 -159.3,22.1 -159.5,21.9" },
  { fill: "#ffefe8", pts: "-171.8,63.5 -168.9,63.3 -169.5,63 -171.7,63.3" },
  { fill: "#fff3ec", pts: "-180,68.9 -174.9,67.2 -175,66.6 -174.3,66.3 -171.9,66.9 -169.9,66 -170.9,65.5 -172.5,65.4 -172.6,64.5 -176,64.9 -177.2,65.5 -178.4,65.4 -178.9,65.9 -180,65" },
  { fill: "#fff3ec", pts: "-180,71.5 -177.6,71.3 -178.7,70.9 -180,70.9" },
  { fill: BASE, pts: "-84.9,21.9 -82.3,23.2 -80.5,23 -77,21.8 -74.2,20.2 -77.7,19.9 -77.1,20.6 -78.5,21.2 -82,22.5" },
  { fill: BASE, pts: "-74.4,18.6 -73,19.9 -70,19.8 -68.4,18.6 -71,17.7 -71.7,19.6 -71.8,17.9 -72.3,18.3" },
  { fill: BASE, pts: "-78.3,18.4 -76.3,18.1 -77.1,17.8" },
  { fill: BASE, pts: "-67.2,18.4 -65.7,18.3 -67.1,18" },
  { fill: BASE, pts: "-78.9,26.7 -77,26.6 -77.2,26" },
  { fill: BASE, pts: "-78.2,25.1 -77.7,24 -78.4,24.6" },
  { fill: BASE, pts: "-61.7,10.7 -61,10.8 -61.1,10.1 -61.8,10.1" },
  { fill: BASE, pts: "-68.6,-52.6 -67,-54 -65.2,-54.7 -68,-55.5 -71,-54.8 -74.5,-53 -70,-53.3" },
  { fill: BASE, pts: "-61.2,-51.9 -58.5,-51.4 -57.8,-51.7 -60.4,-52.3" },
  { fill: BASE, pts: "-14.5,66.4 -13.6,65 -18.7,63.4 -22.8,63.9 -21.8,64.4 -24.3,65.5 -22.1,66.4 -20.5,65.7 -16.2,66.5" },
  { fill: "#fcd5c4", pts: "-3,58.6 -4.2,57.5 -2,57.6 -3.1,56 -1,54.5 0.4,53 1.7,52.7 1,51 -5.7,50.1 -3.4,51.4 -5,51.8 -4.3,52.9 -3,54 -5,54.9 -5.6,56.5 -6.2,57 -5,58.6" },
  { fill: "#fee6db", pts: "-6.2,53.9 -6,52.4 -9.9,51.6 -9.2,53 -9.7,54.2 -7.5,55.2 -5.7,54.5" },
  { fill: BASE, pts: "12.7,55.6 12,54.9 11.1,55.7 12.1,56" },
  { fill: "#fee6db", pts: "15.5,38.2 15.1,36.7 12.4,37.7 12.9,38.1" },
  { fill: "#fee6db", pts: "9.2,41.2 9.8,40.5 9.7,39.1 8.4,39.2 8.2,40.9" },
  { fill: "#fcc7b2", pts: "9.4,43 9.2,41.4 8.6,42.2" },
  { fill: BASE, pts: "23.7,35.6 26.3,35.2 24.7,34.9" },
  { fill: BASE, pts: "32.7,35.2 34.5,35.6 33,34.6" },
  { fill: BASE, pts: "10.5,79.7 18,80.2 27.4,80.1 25,79.3 20,79.4 18.3,78.5 21,77.8 16,76.8 13.8,77.7" },
  { fill: "#fff3ec", pts: "44.8,80.6 47,80.8 51.5,80.7 49,80 46.5,80.2" },
  { fill: "#fff3ec", pts: "51.6,71.5 53.4,73.7 57,75.3 68.2,76.9 68.9,76.5 61.6,75.3 56,73.5 55.6,72.4 57.5,70.8 53.7,70.8" },
  { fill: "#fff3ec", pts: "91.2,80.3 95.9,81.2 100,79.8 99.4,78.8 94,79.4" },
  { fill: "#fff3ec", pts: "99.9,78.9 105,78.7 105,78.3 101,78" },
  { fill: "#fff3ec", pts: "137,75.5 139,76.2 146,75.5 150.8,75.2 145,74.8 139,74.8" },
  { fill: "#fff3ec", pts: "147,75.3 156,75 150,74.7" },
  { fill: "#fff3ec", pts: "140,73.6 143.5,73.4 142,73.2" },
  { fill: "#fff3ec", pts: "143.6,50.7 142.7,53 143,54.4 141.8,53.3 142,46 143.6,46.8 142.6,48 144.6,49" },
  { fill: BASE, pts: "141.9,45.5 145.4,43.2 143.2,42 140,41.5 140.4,43.2 141.7,43.8" },
  { fill: BASE, pts: "141.3,41.4 142,39.2 140.6,36 139.8,35 135.8,33.5 132.4,34 131,33.9 135.7,35.5 137.4,36.8 139.8,38.5 140,40.6" },
  { fill: BASE, pts: "131.7,33.7 131.3,31.5 130,31.8 129.6,33.2 130.9,34" },
  { fill: BASE, pts: "132.7,33.9 134.5,34.2 133.8,33.3 132.9,32.9" },
  { fill: "#fff1ea", pts: "110,20 111,19.8 110,18.4 108.7,18.7 109,19.8" },
  { fill: BASE, pts: "121.8,25 120.8,22 120.2,23.5 121.3,25.1" },
  { fill: BASE, pts: "79.7,9.8 81.8,7.5 80.4,6 79.8,7.6" },
  { fill: BASE, pts: "120.7,18.5 122.2,18.4 122,16 121.6,14.2 124,13.7 124,12.6 120.6,13.8 119.9,15.4 120.6,16" },
  { fill: BASE, pts: "121.9,11.8 123.2,11.5 122,10.4" },
  { fill: BASE, pts: "124.3,12.5 125.5,12 125.3,10.4 124.4,10.8" },
  { fill: BASE, pts: "123,11 124,11.2 123.3,9.2 122.4,9.8" },
  { fill: BASE, pts: "120.4,13.5 121.5,13 121,12.2" },
  { fill: BASE, pts: "119.4,11.3 117.2,8.4 118.5,9.4" },
  { fill: BASE, pts: "126.4,8.4 126.2,6.3 125.4,5.6 124,7 122,7 123.5,8.7 125.5,9.7" },
  { fill: BASE, pts: "95.3,5.6 97.5,5.2 100.6,2.1 103,0 106,-3 105.8,-5.8 104,-5.8 101,-2.8 98.6,1.8" },
  { fill: BASE, pts: "105.4,-6.8 108.6,-6.8 110.8,-6.5 114.5,-7.8 114.6,-8.7 108,-7.8" },
  { fill: BASE, pts: "109,0.4 109.7,2 111.3,2.7 113,3.1 115.5,5.2 116.8,7 119.2,5.3 117.6,4.2 115.8,4.3 114.5,1.5 112,1.4 109.8,0.8 112,1.4 114.5,1.5 115.8,4.3 117.6,4.2 119,1 117.5,0.8 116.5,-2 116,-4 114.6,-4 111.8,-3.4 110,-1.6" },
  { fill: BASE, pts: "119.8,0.5 121,1.3 125,1.6 124,0.4 120.3,0.5 120.9,-1.4 123.3,-0.9 121.7,-1.9 122.7,-4.3 121.5,-4.6 120.9,-2.6 120.4,-5.5 119.5,-5.5 119.5,-3.5 118.8,-2.8" },
  { fill: BASE, pts: "127.5,1.8 128.6,1.6 128.3,-0.8 127.5,0.8" },
  { fill: BASE, pts: "126.8,-3.1 130.4,-2.9 130.6,-3.6 128,-3.4" },
  { fill: BASE, pts: "117,-8.4 122.8,-8.1 122.5,-8.8 118,-8.9" },
  { fill: BASE, pts: "123.5,-10.3 126,-8.4 127.3,-8.4 124.6,-10.2" },
  { fill: BASE, pts: "119,-9.4 120.8,-10 120,-10.2" },
  { fill: BASE, pts: "115,-8.2 116.7,-8.4 115.7,-8.8" },
  { fill: BASE, pts: "134.3,-5.6 134.7,-6.4 134.2,-6.9" },
  { fill: BASE, pts: "130.9,-0.4 134,-0.8 134.8,-3.3 137,-1.7 141,-2.6 141,-9.1 138,-8.4 138.6,-6.9 135,-4.4 132.8,-4 133,-2.5 130.9,-1.4" },
  { fill: NONE, pts: "141,-2.6 144.6,-3.9 147.8,-6.1 147.3,-6.8 150.7,-10.5 147.2,-9.5 144.7,-7.6 142.7,-9.3 141,-9.1" },
  { fill: NONE, pts: "148.3,-5.6 152,-4.2 151.5,-5.6 149.5,-6.3" },
  { fill: NONE, pts: "150.7,-2.7 153,-4.5 152.7,-3.6" },
  { fill: BASE, pts: "154.6,-5.5 156,-6.7 155.2,-6.5" },
  { fill: BASE, pts: "156.5,-6.7 160.8,-8.9 158.5,-7.9" },
  { fill: BASE, pts: "159.7,-9.3 162.2,-10.6 160.7,-9.9" },
  { fill: BASE, pts: "166.7,-14.7 168.2,-17.7 167,-16" },
  { fill: BASE, pts: "164,-20.2 167,-22.3 165,-21.5" },
  { fill: BASE, pts: "177.3,-17.6 178.7,-18 177.7,-18.2" },
  { fill: BASE, pts: "178.6,-16.8 180,-16.1 179.6,-16.7" },
  { fill: BASE, pts: "-180,-16.1 -179.8,-16.1 -180,-16.6" },
  { fill: BASE, pts: "142.5,-10.7 143.6,-14.5 145.3,-15 146.3,-18.9 149.7,-22.4 152.9,-25.3 153.6,-28.7 152.9,-31.6 150.3,-35.7 150,-37.4 146.9,-38.6 144.9,-38 143.6,-38.8 140.6,-38 139.6,-36.1 138.1,-35.6 138.2,-34.4 136.8,-35.3 137.8,-32.9 136,-34.9 134.2,-32.8 131.3,-31.5 126.1,-32.2 124,-33.5 120,-34 117.9,-35.1 115,-34.2 115.7,-31.6 113.3,-26.1 114.1,-21.8 116.7,-20.7 120.9,-19.7 122.2,-18 123.9,-17.3 124.3,-16.3 127,-14 129.4,-14.9 130.6,-12.5 132.6,-12.1 132,-11.3 136.9,-12 135.5,-15 139.3,-17.4 140.9,-17.4 141.7,-14.5 141.8,-12.4" },
  { fill: BASE, pts: "144.7,-40.7 148.3,-40.9 148,-43.2 146,-43.6" },
  { fill: BASE, pts: "172.7,-34.5 174.6,-36.2 175.8,-37.4 178.5,-37.7 177,-39.6 175.3,-41.6 175,-39.9 173.8,-39.3 174.7,-37.4" },
  { fill: BASE, pts: "172.8,-40.5 174.2,-41.4 173,-43.3 170.5,-45.9 169.3,-46.6 166.5,-46 168.3,-44.1 171,-42.4" },
  { fill: BASE, pts: "49.5,-12.5 50.5,-15.7 49.5,-17.9 47,-25 45.4,-25.6 43.9,-24.9 43.2,-22.6 44.4,-20.1 44,-17.4 44.5,-16.2 46.4,-15.6" },
  { fill: BASE, pts: "68.9,-48.8 70.5,-49.1 70.2,-49.7 68.8,-49.6" },
  { fill: BASE, pts: "-98.5,-71.7 -96.5,-72.4 -102,-72.2" },
  { fill: BASE, pts: "-75.2,-69.8 -70.3,-69.4 -68.5,-71 -69.5,-72.5 -75,-71.7 -70.8,-71" },
  { fill: BASE, pts: "-54,-79.6 -51,-80.3 -44,-80.2 -43.4,-79 -46,-78 -48.5,-78.2 -50.4,-79.1" },
  { fill: BASE, pts: "-125,-73.7 -119,-73.7 -122,-73.2" },
  { fill: BASE, pts: "-63,-80 -59.6,-80.1 -61,-79.6" },
];

const CASPIAN = "46.7,44.6 47.6,45.6 49.1,46.4 51.2,47 53,46.9 53,45.3 51.3,45.2 51,44.5 50.3,44.3 52.5,42.6 54,41.6 52.9,41 52.7,40 53.6,39.3 53.8,37 51,36.8 49.2,37.6 48.9,38.8 50.2,40.3 49.6,40.6 48.6,41.8 47.5,43";

const LAKES: string[] = [
  "-92,46.7 -90,47.8 -88,48.6 -86,48.6 -84.9,46.8 -87,46.4 -90,46.7",
  "-87.8,42 -86.3,42 -86.3,44 -85,45.8 -87.5,45.2",
  "-84.6,45.9 -81,45.7 -80,44.6 -82.3,43.2 -83.3,45",
  "-83.4,41.6 -79,42.7 -81,42.8", "-79.7,43.3 -76.4,43.6 -79,43.9",
  "-98.8,53.7 -96.2,50.6 -97,53 -98,53.9", "-117.5,61.2 -109,62.6 -113,61.2 -116,60.8", "-125,66.2 -121,65.6 -117.6,66.5 -119,67 -121.5,66.6 -123.5,66.8", "-111.3,58.8 -106,59.5 -108,59.1",
  "-103,56.4 -101.2,58.1 -101.8,57", "103.7,51.4 106,51.8 109.6,54.2 109.8,55.8 107.5,53.2", "74,46 77,46.6 79,46.6 76,46.3 73.6,45.3", "30.2,61 32.5,60.4 32,61.4", "35,61.3 36,62.4 34.6,62.3", "32,-2.4 34,-1.8 33.8,0.3 31.8,-0.2", "29.2,-3.4 31.1,-8.6 30.3,-8.3 29,-5", "34.2,-9.7 35,-14 34.2,-12.2",
];

function WorldMap() {
  return (
    <g>
      <defs>
        <clipPath id="frame">
          <rect x={MAP_X} y={MAP_Y} width={MAP_W} height={MAP_H} />
        </clipPath>
        <clipPath id="land">
          {LANDMASSES.map((d, i) => (
            <path key={i} d={d} />
          ))}
        </clipPath>
      </defs>
      <g clipPath="url(#frame)" stroke={LINE} strokeWidth={1.15} strokeLinejoin="round" fill="none">
        {LANDMASSES.map((d, i) => (
          <path key={i} d={d} fill={BASE} stroke="none" />
        ))}
        <g clipPath="url(#land)">
          {REGIONS.map((s, i) => (
            <path key={i} d={trace(s.pts)} fill={s.fill} />
          ))}
          {BORDERS.map((b, i) => (
            <path key={i} d={trace(b, false)} />
          ))}
        </g>
        {LAKES.map((l, i) => (
          <path key={i} d={trace(l)} fill="#ffffff" stroke="none" />
        ))}
        <path d={trace(CASPIAN)} fill="#ffffff" />
        {LANDMASSES.map((d, i) => (
          <path key={i} d={d} />
        ))}
        {ISLANDS.map((s, i) => (
          <path key={i} d={trace(s.pts, true, s.pts.length > 140)} fill={s.fill} />
        ))}
      </g>
      <rect x={MAP_X} y={MAP_Y} width={MAP_W} height={MAP_H} fill="none" stroke="#444444" strokeWidth={1.1} />
    </g>
  );
}

const TICKS = ["35k", "30k", "25k", "20k", "15k", "10k", "5k", "0"];

const REDS = ["#67000d", "#a50f15", "#cb181d", "#ef3b2c", "#fb6a4a", "#fc9272", "#fcbba1", "#fee0d2", "#fff5f0"];

function BookingsChart() {
  return (
    <svg
      className="block h-[580px] w-[1340px] font-['DejaVu_Sans',Verdana,sans-serif]"
      viewBox="242 340 1340 580"
      fill="#2a3f5f"
    >
      <text x={317.5} y={389.5} fontSize={18.85} fill="#1b3158" textLength={362} lengthAdjust="spacingAndGlyphs">
        Geographical Distribution of Bookings
      </text>
      <WorldMap />
      <defs>
        <linearGradient id="reds" x1="0" y1="0" x2="0" y2="1">
          {REDS.map((c, i) => (
            <stop key={c} offset={i / (REDS.length - 1)} stopColor={c} />
          ))}
        </linearGradient>
      </defs>
      <text x={1442.5} y={472.5} fontSize={15.7} textLength={117} lengthAdjust="spacingAndGlyphs">
        total_bookings
      </text>
      <rect x={1442.5} y={483.3} width={34} height={406} fill="url(#reds)" />
      {TICKS.map((t, i) => (
        <text key={t} x={1480} y={526.7 + i * 52.45} fontSize={13.6}>
          {t}
        </text>
      ))}
    </svg>
  );
}

const STATS = [
  { title: "Total Bookings in 2025", value: "7815" },
  { title: "Our hotel is loved by", value: "163 Countries!" },
  { title: "Canceled Bookings in 2025", value: "2608" },
  { title: "Avg. Lead Time (past 3 months)", value: "64.0 days" },
];

function StatCard({ title, value }: { title: string; value: string }) {
  return (
    <div className="h-[120px] rounded-[4px] border border-l-4 border-[#dcdfe2] border-l-[#0d6efd] bg-[#f8f9fb] pt-[20px] pl-[17px] shadow-[0_2px_4px_rgba(0,0,0,0.08)]">
      <h3 className="text-[16.8px] leading-[22px] font-bold whitespace-nowrap">{title}</h3>
      <p className="mt-[20px] text-[16px] leading-[22px] font-bold tracking-[-0.14px]">{value}</p>
    </div>
  );
}

function ScrollBar() {
  return (
    <div className="flex h-full w-[18px] shrink-0 flex-col items-center bg-[#fcfcfc] pt-[10px] pb-[9px] pl-px">
      <svg width="13" height="10" viewBox="0 0 13 10" fill="#8a8a8a">
        <path d="M5.5 .8Q6.5 -.4 7.5 .8L12.3 8Q12.8 9.7 11.5 9.7H1.5Q.2 9.7 .7 8Z" />
      </svg>
      <div className="mt-[9px] h-[440px] w-[11px] rounded-full bg-[#8a8a8a]" />
      <svg className="mt-auto" width="13" height="10" viewBox="0 0 13 10" fill="#8a8a8a">
        <path d="M5.5 9.2Q6.5 10.4 7.5 9.2L12.3 2Q12.8 .3 11.5 .3H1.5Q.2 .3 .7 2Z" />
      </svg>
    </div>
  );
}

export default function App() {
  return (
    <div className="h-[965px] w-full overflow-hidden bg-[#24324a] font-['Liberation_Sans',Arial,sans-serif] text-black">
      <div className="flex h-full overflow-hidden rounded-[9px] bg-white">
        <div className="flex min-w-0 flex-1 flex-col">
          <nav className="flex h-[61px] shrink-0 items-center justify-between bg-[#333333] pr-[252px] pl-[242px]">
            <span className="text-[16.8px] font-bold text-white">Hotel Booking Analytics</span>
            <div className="flex gap-[22.6px] pt-px text-[14px] tracking-[-0.27px] text-[#d0d0d0]">
              <a>Dashboard</a>
              <a>Chat with Database</a>
              <a>Add Data</a>
            </div>
          </nav>
          <main className="flex-1 border-l border-[#9da3b0] pl-[241px]">
            <h1 className="mt-[42px] text-[27px] leading-[34px] font-bold">Hotel Booking Analytics Dashboard</h1>
            <section className="mt-[25px] grid w-[1315.6px] grid-cols-4 gap-[33.6px]">
              {STATS.map((s) => (
                <StatCard key={s.title} title={s.title} value={s.value} />
              ))}
            </section>
            <section className="mt-[58px]">
              <BookingsChart />
            </section>
          </main>
        </div>
        <ScrollBar />
      </div>
    </div>
  );
}
